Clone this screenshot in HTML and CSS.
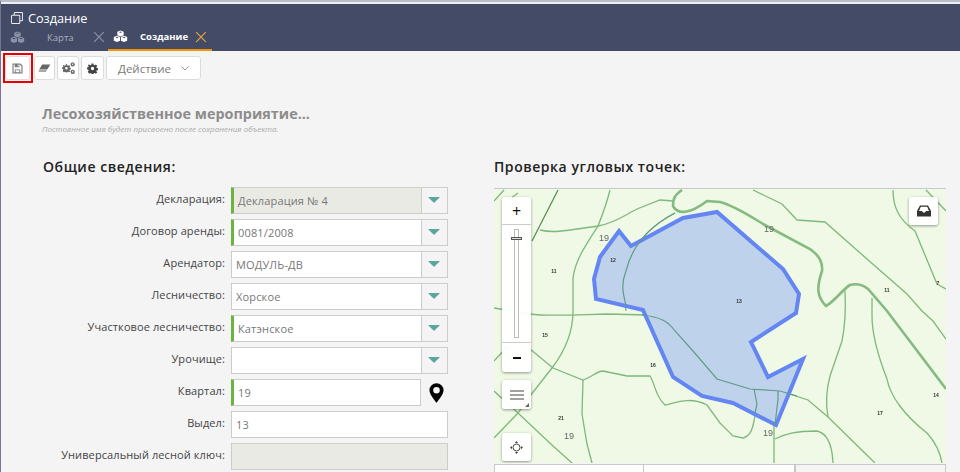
FILE: index.html
```html
<!DOCTYPE html>
<html lang="ru">
<head>
<meta charset="utf-8">
<title>Создание</title>
<link rel="stylesheet" href="styles.css">
</head>
<body>
<svg class="defs" width="0" height="0" aria-hidden="true">
  <symbol id="cubes" viewBox="0 0 16 14">
    <path d="M8 0.500l3.400 1.400v3.700L8 7 4.600 5.600V1.900z M8 1.600L6.300 2.300 8 3l1.700-.7z"/>
    <path d="M4.200 6.300l3.300 1.300v3.900L4.200 13 .8 11.500V7.600z M4.200 7.400L2.500 8.100l1.700.7 1.700-.7z"/>
    <path d="M11.800 6.300l3.400 1.300v3.900L11.800 13l-3.300-1.500V7.600z M11.800 7.400l-1.700.7 1.700.7 1.700-.7z"/>
  </symbol>
  <symbol id="cog" viewBox="0 0 12 12">
    <path fill-rule="evenodd" d="M5 .5h2l.3 1.600 1 .4L9.700 1.600l1.400 1.400-.9 1.400.4 1 1.600.3v2l-1.600.3-.4 1 .9 1.400-1.400 1.400-1.400-.9-1 .4-.3 1.600H5l-.3-1.600-1-.4-1.400.9L.9 9.600l.9-1.400-.4-1-1.600-.3v-2l1.600-.3.4-1-.9-1.400L2.300 1.600l1.400.9 1-.4zM6 4.200a1.800 1.800 0 1 0 0 3.600 1.800 1.800 0 0 0 0-3.600z"/>
  </symbol>
</svg>

<div class="page">
  <header class="header">
    <div class="title">
      <svg class="title-icon" viewBox="0 0 13 13"><path d="M3.500 3V1.500a1 1 0 0 1 1-1h7a1 1 0 0 1 1 1v7a1 1 0 0 1-1 1H10M1.500 3.500h7a1 1 0 0 1 1 1v7a1 1 0 0 1-1 1h-7a1 1 0 0 1-1-1v-7a1 1 0 0 1 1-1z"/></svg>
      <span>Создание</span>
    </div>
    <nav class="tabs">
      <div class="tab">
        <svg class="cubes cubes-dim"><use href="#cubes"/></svg>
        <span class="tab-name">Карта</span>
        <svg class="tab-x" viewBox="0 0 10 10"><path d="M1 1l8 8M9 1l-8 8"/></svg>
      </div>
      <div class="tab tab-active">
        <svg class="cubes"><use href="#cubes"/></svg>
        <span class="tab-name">Создание</span>
        <svg class="tab-x" viewBox="0 0 10 10"><path d="M1 1l8 8M9 1l-8 8"/></svg>
      </div>
    </nav>
  </header>

  <div class="toolbar">
    <button class="tool tool-save">
      <svg viewBox="0 0 12 12"><path fill="none" stroke="#777" stroke-width="1.200" d="M1.100 1.100h7.800l2 2v7.800H1.100z"/><path fill="#777" d="M3 1h5v3.500H3zM3 7h6v4H3z"/><path fill="#fff" d="M6.300 1.700h1v2h-1zM4 8h4v2.200H4z"/></svg>
    </button>
    <button class="tool tool-eraser">
      <svg viewBox="0 0 14 10"><path fill="#666" d="M4.500 .5h9L10 6H1z"/><path fill="#aaa" d="M1 6.800h8.800L8.500 9H.5z"/></svg>
    </button>
    <button class="tool tool-cogs">
      <svg viewBox="0 0 14 13"><use href="#cog" x="0" y="2" width="9.500" height="9.500" fill="#666"/><use href="#cog" x="9" y="0" width="5" height="5" fill="#666"/><use href="#cog" x="9" y="8" width="5" height="5" fill="#666"/></svg>
    </button>
    <button class="tool tool-cog">
      <svg viewBox="0 0 12 12"><use href="#cog" fill="#444"/></svg>
    </button>
    <button class="tool tool-action">
      <span>Действие</span>
      <svg viewBox="0 0 8 5"><path d="M.5.500L4 4 7.500.500"/></svg>
    </button>
    <div class="marker"></div>
  </div>

  <main class="content">
    <h1 class="doc-title">Лесохозяйственное мероприятие...</h1>
    <p class="doc-note">Постоянное имя будет присвоено после сохранения объекта.</p>

    <div class="columns">
      <section class="col-form">
        <h2 class="section-title">Общие сведения:</h2>
        <div class="rows">
          <div class="row">
            <label class="lbl">Декларация:</label>
            <div class="combo"><div class="value req disabled">Декларация № 4</div><div class="arrow"></div></div>
          </div>
          <div class="row">
            <label class="lbl">Договор аренды:</label>
            <div class="combo"><div class="value req">0081/2008</div><div class="arrow"></div></div>
          </div>
          <div class="row">
            <label class="lbl">Арендатор:</label>
            <div class="combo"><div class="value">МОДУЛЬ-ДВ</div><div class="arrow"></div></div>
          </div>
          <div class="row">
            <label class="lbl">Лесничество:</label>
            <div class="combo"><div class="value">Хорское</div><div class="arrow"></div></div>
          </div>
          <div class="row">
            <label class="lbl">Участковое лесничество:</label>
            <div class="combo"><div class="value req">Катэнское</div><div class="arrow"></div></div>
          </div>
          <div class="row">
            <label class="lbl">Урочище:</label>
            <div class="combo"><div class="value"></div><div class="arrow"></div></div>
          </div>
          <div class="row">
            <label class="lbl">Квартал:</label>
            <div class="combo combo-pin">
              <div class="value req">19</div>
              <svg class="pin" viewBox="0 0 16 22"><path fill-rule="evenodd" d="M8 .5a7.500 7.500 0 0 1 7.500 7.500c0 4-4.500 9.500-7.500 13.500C5 17.500.5 12 .5 8A7.500 7.500 0 0 1 8 .5zM8 4.500a3.500 3.500 0 1 0 0 7 3.500 3.500 0 0 0 0-7z"/></svg>
            </div>
          </div>
          <div class="row">
            <label class="lbl">Выдел:</label>
            <div class="combo"><div class="value">13</div></div>
          </div>
          <div class="row">
            <label class="lbl">Универсальный лесной ключ:</label>
            <div class="combo"><div class="value disabled"></div></div>
          </div>
        </div>
      </section>

      <section class="col-map">
        <h2 class="section-title">Проверка угловых точек:</h2>
        <div class="map">
          <svg class="map-svg" viewBox="494 188 452 274">
            <g class="ln">
              <path d="M610 189C606 205 602 215 598 225C585 245 575 260 573 277L573 310C573 330 565 350 552 367L530 395L518 412L494 437"/>
              <path d="M540 229C555 233 575 228 598 225C615 222 625 214 637 208L660 199L673 200"/>
              <path d="M675 212C650 225 632 245 626 270C620 285 624 295 626 310"/>
              <path d="M494 307L530 313C550 316 590 313 607 313L647 314C660 316 668 320 675 330L693 350L717 378L750 388L780 390L808 399L828 416L875 462"/>
              <path d="M530 348L553 367L583 379C592 376 597 370 603 370L627 375H650C656 385 655 395 665 404C675 402 690 395 707 404L720 422L733 435L743 437C750 435 752 430 754 420L757 403L754 388"/>
              <path d="M583 379L582 413L587 443L592 462"/>
              <path d="M494 390L518 412L553 445L572 462"/>
              <path d="M494 360L508 345"/>
              <path d="M778 390L778 398L774 425V462"/>
              <path d="M775 438C785 433 795 430 817 430C826 432 832 440 833 462"/>
              <path d="M753 189L782 203L797 219L825 221L867 258L907 293L922 310L933 320L946 338"/>
              <path d="M845 290C846 310 845 325 842 340L830 375C826 390 826 405 828 416"/>
              <path d="M872 297V315C872 335 880 360 887 378C890 395 905 415 927 432C936 442 940 450 942 462"/>
              <path d="M893 189C893 205 898 218 915 230L937 283L946 288"/>
              <path d="M926 189L946 210"/>
              <path d="M494 200L504 189M507 200L518 192"/>
            </g>
            <path class="ln-dark" d="M558 189L532 240"/>
            <path class="ln-thick" d="M682 189C673 195 673 200 673 205C678 214 690 213 707 200L720 201C735 205 750 215 763 223L810 248C820 255 823 262 822 270C817 285 816 295 826 305C835 300 843 288 850 284C858 282 863 284 868 288L887 310L946 388"/>
            <polygon class="plot" points="619,230 631,245 683,217 717,211 783,268 799,293 796,312 751,341 768,376 803,358 776,424 733,402 702,395 673,376 643,309 596,298 594,278 600,256"/>
            <g class="ln-over">
              <path d="M642 314C660 316 668 320 675 330L693 350L717 378L750 388L780 390L797 395"/>
              <path d="M754 388L757 403L755 412M778 390L778 398L775 424"/>
              <path d="M675 212C650 225 632 245 626 270C620 285 624 295 626 305"/>
            </g>
            <g class="map-lbl-big">
              <text x="604" y="240">19</text>
              <text x="769" y="231">19</text>
              <text x="569" y="438">19</text>
              <text x="768" y="435">19</text>
            </g>
            <g class="map-lbl">
              <text x="613" y="261">12</text>
              <text x="554" y="272">11</text>
              <text x="739" y="302">13</text>
              <text x="887" y="291">11</text>
              <text x="938" y="284">7</text>
              <text x="545" y="336">15</text>
              <text x="653" y="366">16</text>
              <text x="561" y="419">21</text>
              <text x="880" y="414">17</text>
              <text x="936" y="396">14</text>
            </g>
          </svg>

          <div class="ctrl zoom-panel">
            <div class="zoom-btn">+</div>
            <div class="slider"><div class="slider-knob"></div></div>
            <div class="zoom-btn zoom-minus"><span></span></div>
          </div>
          <div class="ctrl menu-btn">
            <svg viewBox="0 0 14 10"><path d="M0 1h14M0 5h14M0 9h14"/></svg>
            <i class="corner"></i>
          </div>
          <div class="ctrl locate-btn">
            <svg viewBox="0 0 16 16"><circle cx="8" cy="8" r="4.300"/><path d="M8 0l2 2.500H6zM8 16l2-2.500H6zM0 8l2.500 2V6zM16 8l-2.500 2V6z" class="fill"/></svg>
          </div>
          <div class="ctrl inbox-btn">
            <svg viewBox="0 0 14 12"><path fill-rule="evenodd" d="M3 .5h8L14 6v5.500H0V6zM3.800 1.800L2 6h3l1 1.500h2L9 6h3l-1.800-4.200z"/></svg>
          </div>
        </div>
        <div class="map-tabs">
          <div class="map-tab"></div>
          <div class="map-tab"></div>
          <div class="map-tab map-tab-off"></div>
        </div>
      </section>
    </div>
  </main>
</div>
</body>
</html>
```
FILE: styles.css
```css
* { box-sizing: border-box; }
html, body { margin: 0; height: 100%; overflow: hidden; }
body { font-family: "Open Sans", "Liberation Sans", sans-serif; background: #f4f4f4; color: #333; }
.defs { position: absolute; }

.page { height: 472px; overflow: hidden; border-left: 1px solid #6f7794; border-top: 2px solid #b9bccb; background: #f4f4f4; }
.header { height: 49px; margin-left: -1px; border-top: 2px solid #eef0f4; background: #434b66; color: #fff; }
.title { display: flex; align-items: center; gap: 5px; padding: 5px 0 0 11px; font-size: 12.700px; line-height: 18px; }
.title-icon { width: 12px; height: 12px; fill: none; stroke: #e8e9ee; stroke-width: 1.100; }
.tabs { display: flex; height: 24px; }
.tab { display: flex; align-items: center; position: relative; padding-bottom: 3px; color: #a9aebf; font-size: 9.500px; }
.tab:first-child { width: 108px; padding-left: 10px; }
.tab-active { width: 104px; padding-left: 5px; color: #fff; font-weight: 700; border-bottom: 2px solid #f29400; }
.cubes { width: 15px; height: 13px; fill: #fff; flex: none; }
.cubes-dim { fill: #8a90a6; }
.tab-name { margin-left: 22px; }
.tab-active .tab-name { margin-left: 12px; }
.tab-x { position: absolute; width: 12px; height: 12px; stroke: #8f95aa; stroke-width: .9; fill: none; left: 93px; top: 4px; }
.tab-active .tab-x { stroke: #f0a93a; left: 87px; }

.toolbar { display: flex; gap: 2px; padding: 5px 0 0 4px; height: 32px; position: relative; }
.tool { display: flex; align-items: center; justify-content: center; height: 24px; padding: 0; background: #fff; border: 1px solid #dcdcdc; border-radius: 3px; font: inherit; }
.tool svg { width: 11px; height: 11px; }
.tool-save { width: 25px; margin-right: 2px; }
.tool-eraser { width: 21px; }
.tool-eraser svg { width: 13px; height: 9px; }
.tool-cogs { width: 22px; }
.tool-cogs svg { width: 13px; height: 12px; }
.tool-cog { width: 23px; }
.tool-action { width: 95px; gap: 10px; color: #777; font-size: 11.500px; }
.tool-action svg { width: 8px; height: 5px; fill: none; stroke: #999; }
.marker { position: absolute; left: 2px; top: 2px; width: 30px; height: 30px; border: 2px solid #e60000; }

.content { padding: 0 0 0 41px; }
.doc-title { margin: 21px 0 0; font-size: 14.400px; line-height: 19px; font-weight: 700; color: #8c8c8c; }
.doc-note { margin: 1px 0 0; font-size: 8px; line-height: 10px; font-style: italic; color: #aaa; }
.columns { display: flex; margin-top: 24px; }
.col-form { width: 452px; flex: none; }
.col-map { width: 452px; flex: none; }
.section-title { margin: 0 0 11px 1px; font-size: 14px; line-height: 18px; font-weight: 600; color: #222; letter-spacing: .55px; }
.col-map .section-title { margin: 0 0 12px; }

.rows { display: flex; flex-direction: column; gap: 5px; }
.row { display: flex; align-items: flex-start; height: 27px; }
.lbl { width: 183px; padding-top: 4px; text-align: right; font-size: 11px; line-height: 16px; color: #444; letter-spacing: .1px; }
.combo { display: flex; width: 217px; height: 27px; margin-left: 6px; }
.value { flex: 1; height: 27px; padding: 5px 0 0 4px; background: #fff; border: 1px solid #ccc; font-size: 11px; line-height: 16px; color: #777; letter-spacing: .15px; }
.value.req { border-left: 3px solid #6cb33f; }
.value.disabled { background: #eaeae4; }
.arrow { position: relative; width: 27px; height: 27px; margin-left: -1px; background: #f4f4f4; border: 1px solid #ccc; }
.arrow::after { content: ""; position: absolute; left: 6px; top: 9px; border-style: solid; border-width: 6px 6px 0; border-color: #5ea5a0 transparent transparent; }
.combo-pin { width: 217px; }
.combo-pin .value { flex: none; width: 190px; }
.pin { width: 15px; height: 22px; margin: 3px 0 0 8px; fill: #000; }

.map { position: relative; width: 452px; height: 275px; overflow: hidden; background: #eff9e6; border-top: 1px solid #c8c8c8; }
.map-svg { display: block; width: 452px; height: 274px; filter: blur(.35px); }
.ln path { fill: none; stroke: #7fb87b; stroke-width: 1.300; }
.ln-dark { fill: none; stroke: #4f8a4e; stroke-width: 1.200; }
.ln-thick { fill: none; stroke: #85bb80; stroke-width: 2.600; }
.ln-over path { fill: none; stroke: #5f9c86; stroke-width: 1.200; }
.plot { fill: #bfd2ec; stroke: #6486f2; stroke-width: 4; stroke-linejoin: miter; }
.map-lbl-big text { font-family: "Liberation Sans", sans-serif; font-size: 9px; fill: #666; text-anchor: middle; }
.map-lbl text { font-family: "Liberation Sans", sans-serif; font-size: 5px; font-weight: 700; fill: #333; text-anchor: middle; }

.ctrl { position: absolute; left: 8px; width: 29px; background: rgba(255,255,255,.95); border-radius: 3px; box-shadow: 0 1px 3px rgba(0,0,0,.4); }
.zoom-panel { top: 8px; height: 175px; display: flex; flex-direction: column; }
.zoom-btn { display: flex; align-items: center; justify-content: center; height: 28px; font-size: 16px; line-height: 16px; color: #111; flex: none; border-bottom: 1px solid #ccc; }
.zoom-minus { height: 30px; border-top: 1px solid #ccc; border-bottom: 0; }
.zoom-minus span { display: block; width: 8px; height: 2px; background: #111; }
.slider { position: relative; flex: 1; }
.slider::before { content: ""; position: absolute; left: 12px; top: 4px; bottom: 4px; width: 3px; background: #fff; border: 1px solid #bbb; }
.slider-knob { position: absolute; left: 9px; top: 12px; width: 11px; height: 3px; background: #ddd; border: 1px solid #555; }
.menu-btn { top: 191px; height: 29px; display: flex; align-items: center; justify-content: center; }
.menu-btn svg { width: 14px; height: 10px; stroke: #444; stroke-width: 1.200; fill: none; }
.corner { position: absolute; right: 2px; bottom: 2px; border-style: solid; border-width: 0 0 4px 4px; border-color: transparent transparent #666; }
.locate-btn { top: 244px; height: 28px; display: flex; align-items: center; justify-content: center; }
.locate-btn svg { width: 13px; height: 13px; stroke: #444; stroke-width: 1.200; fill: none; }
.locate-btn .fill { fill: #444; stroke: none; }
.inbox-btn { left: 415px; top: 8px; height: 28px; display: flex; align-items: center; justify-content: center; }
.inbox-btn svg { width: 14px; height: 12px; fill: #333; }

.map-tabs { display: flex; margin-top: 1px; height: 20px; }
.map-tab { width: 150px; background: #fff; border: 1px solid #c8c8c8; }
.map-tab + .map-tab { margin-left: -1px; width: 152px; }
.map-tab-off { background: #f4f4f4; border-width: 1px 1px 1px 2px; }
```
